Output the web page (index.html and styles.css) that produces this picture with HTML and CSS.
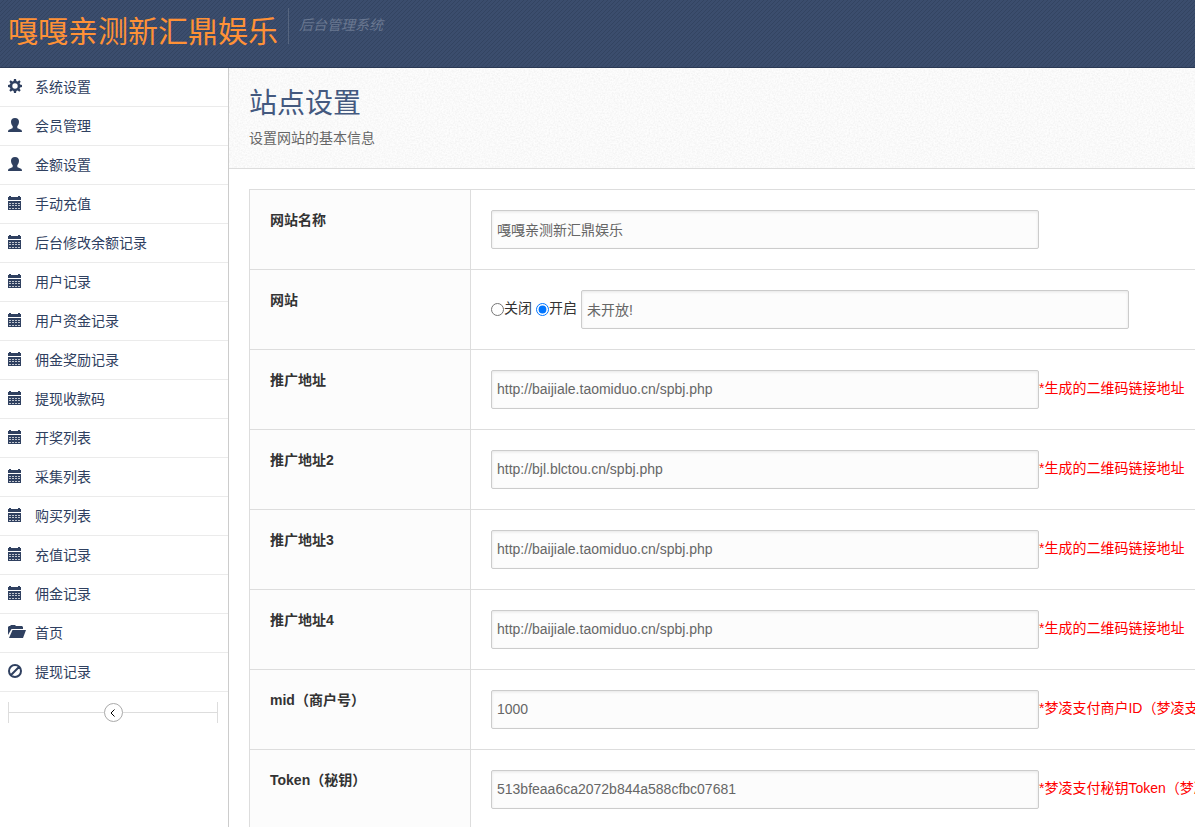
FILE: index.html
```
<!DOCTYPE html>
<html lang="zh-CN">
<head>
  <meta charset="UTF-8">
  <meta name="viewport" content="width=device-width, initial-scale=1">
  <title>站点设置</title>
  <link rel="stylesheet" href="styles.css">
</head>
<body>
  <!-- icon set -->
  <svg class="icon-defs" aria-hidden="true">
    <symbol id="i-cog" viewBox="0 0 14 14" preserveAspectRatio="xMinYMid">
      <path fill-rule="evenodd" d="M6 0h2l.4 1.900 1.300.5 1.600-1.100 1.400 1.400-1.100 1.600.5 1.300L14 6v2l-1.900.4-.5 1.300 1.100 1.600-1.400 1.400-1.600-1.100-1.300.5L8 14H6l-.4-1.900-1.300-.5-1.600 1.100-1.400-1.400 1.100-1.600-.5-1.300L0 8V6l1.900-.4.5-1.300-1.100-1.600 1.400-1.400 1.600 1.100 1.300-.5zM7 4.300a2.700 2.700 0 1 0 0 5.400a2.700 2.700 0 1 0 0-5.400z"/>
    </symbol>
    <symbol id="i-user" viewBox="0 0 14 14" preserveAspectRatio="xMinYMid">
      <path d="M7 0c2.600 0 4 1.400 4 3.800 0 1.900-.7 3.500-1.700 4.400v1.200c0 .6.300.9.900 1.200l2.200.9c1.100.4 1.600 1.100 1.600 2.500H0c0-1.400.5-2.100 1.600-2.500l2.200-.9c.6-.3.9-.6.9-1.200V8.200C3.700 7.300 3 5.700 3 3.800 3 1.400 4.400 0 7 0z"/>
    </symbol>
    <symbol id="i-cal" viewBox="0 0 14 14" preserveAspectRatio="xMinYMid">
      <path d="M0 1h1V0h2v1h7V0h2v1h1v3H0zM0 5h13v9H0z"/>
      <path fill="#fff" fill-opacity=".7" d="M1 7h2v1H1zM4 7h2v1H4zM7 7h2v1H7zM10 7h2v1h-2zM1 9h2v1H1zM4 9h2v1H4zM7 9h2v1H7zM10 9h2v1h-2zM1 12h2v1H1zM4 12h2v1H4zM7 12h2v1H7zM10 12h2v1h-2z"/>
    </symbol>
    <symbol id="i-folder" viewBox="0 0 18 14" preserveAspectRatio="xMinYMid">
      <path d="M0 10V2l1-1h1l1-1h4l1 1h6l1 1v2H3.500z"/>
      <path d="M4.500 5H18l-3 8H1z"/>
    </symbol>
    <symbol id="i-ban" viewBox="0 0 14 14" preserveAspectRatio="xMinYMid">
      <path fill="none" stroke="currentColor" stroke-width="2" d="M7 1a6 6 0 1 0 0 12a6 6 0 1 0 0-12zM2.800 11.200l8.400-8.400"/>
    </symbol>
  </svg>

  <header class="topbar">
    <h1 class="brand">嘎嘎亲测新汇鼎娱乐</h1>
    <em class="tagline">后台管理系统</em>
  </header>

  <div class="layout">
    <aside class="sidebar">
      <nav>
        <ul class="menu">
          <li><a href="#"><svg class="icon"><use href="#i-cog"/></svg>系统设置</a></li>
          <li><a href="#"><svg class="icon"><use href="#i-user"/></svg>会员管理</a></li>
          <li><a href="#"><svg class="icon"><use href="#i-user"/></svg>金额设置</a></li>
          <li><a href="#"><svg class="icon"><use href="#i-cal"/></svg>手动充值</a></li>
          <li><a href="#"><svg class="icon"><use href="#i-cal"/></svg>后台修改余额记录</a></li>
          <li><a href="#"><svg class="icon"><use href="#i-cal"/></svg>用户记录</a></li>
          <li><a href="#"><svg class="icon"><use href="#i-cal"/></svg>用户资金记录</a></li>
          <li><a href="#"><svg class="icon"><use href="#i-cal"/></svg>佣金奖励记录</a></li>
          <li><a href="#"><svg class="icon"><use href="#i-cal"/></svg>提现收款码</a></li>
          <li><a href="#"><svg class="icon"><use href="#i-cal"/></svg>开奖列表</a></li>
          <li><a href="#"><svg class="icon"><use href="#i-cal"/></svg>采集列表</a></li>
          <li><a href="#"><svg class="icon"><use href="#i-cal"/></svg>购买列表</a></li>
          <li><a href="#"><svg class="icon"><use href="#i-cal"/></svg>充值记录</a></li>
          <li><a href="#"><svg class="icon"><use href="#i-cal"/></svg>佣金记录</a></li>
          <li><a href="#"><svg class="icon"><use href="#i-folder"/></svg>首页</a></li>
          <li><a href="#"><svg class="icon"><use href="#i-ban"/></svg>提现记录</a></li>
        </ul>
      </nav>
      <div class="collapse">
        <button type="button" class="collapse-btn" aria-label="收起菜单">
          <svg viewBox="0 0 8 8" width="8" height="8"><path d="M5.500 0.500L2 4l3.500 3.500" fill="none" stroke="#000"/></svg>
        </button>
      </div>
    </aside>

    <main class="main">
      <div class="page-head">
        <h2>站点设置</h2>
        <p>设置网站的基本信息</p>
      </div>
      <form class="content">
        <table class="settings">
          <tbody>
            <tr>
              <th scope="row"><label for="sitename">网站名称</label></th>
              <td><div class="field"><input type="text" id="sitename" value="嘎嘎亲测新汇鼎娱乐"></div></td>
            </tr>
            <tr>
              <th scope="row"><label for="closemsg">网站</label></th>
              <td>
                <div class="field">
                  <label class="choice"><input type="radio" name="open" value="0"><span>关闭</span></label>
                  <label class="choice"><input type="radio" name="open" value="1" checked><span>开启</span></label>
                  <input type="text" id="closemsg" value="未开放!">
                </div>
              </td>
            </tr>
            <tr>
              <th scope="row"><label for="url1">推广地址</label></th>
              <td><div class="field"><input type="text" id="url1" value="http://baijiale.taomiduo.cn/spbj.php"><span class="hint">*生成的二维码链接地址</span></div></td>
            </tr>
            <tr>
              <th scope="row"><label for="url2">推广地址2</label></th>
              <td><div class="field"><input type="text" id="url2" value="http://bjl.blctou.cn/spbj.php"><span class="hint">*生成的二维码链接地址</span></div></td>
            </tr>
            <tr>
              <th scope="row"><label for="url3">推广地址3</label></th>
              <td><div class="field"><input type="text" id="url3" value="http://baijiale.taomiduo.cn/spbj.php"><span class="hint">*生成的二维码链接地址</span></div></td>
            </tr>
            <tr>
              <th scope="row"><label for="url4">推广地址4</label></th>
              <td><div class="field"><input type="text" id="url4" value="http://baijiale.taomiduo.cn/spbj.php"><span class="hint">*生成的二维码链接地址</span></div></td>
            </tr>
            <tr>
              <th scope="row"><label for="mid">mid（商户号）</label></th>
              <td><div class="field"><input type="text" id="mid" value="1000"><span class="hint">*梦凌支付商户ID（梦凌支付）</span></div></td>
            </tr>
            <tr>
              <th scope="row"><label for="token">Token（秘钥）</label></th>
              <td><div class="field"><input type="text" id="token" value="513bfeaa6ca2072b844a588cfbc07681"><span class="hint">*梦凌支付秘钥Token（梦凌支付）</span></div></td>
            </tr>
          </tbody>
        </table>
      </form>
    </main>
  </div>
</body>
</html>
```
FILE: styles.css
```
* {
  box-sizing: border-box;
}
body {
  margin: 0;
  height: 100vh;
  display: flex;
  flex-direction: column;
  font-family: "Liberation Sans", "Noto Sans CJK SC", sans-serif;
  font-size: 14px;
  line-height: 20px;
  color: #333;
  background: #fff;
}
.icon-defs {
  position: absolute;
  width: 0;
  height: 0;
}

/* top bar */
.topbar {
  flex: none;
  display: flex;
  align-items: flex-start;
  height: 68px;
  padding: 8px;
  background: #3b4d6d url("data:image/svg+xml,%3Csvg xmlns='http://www.w3.org/2000/svg' width='4' height='4' shape-rendering='crispEdges'%3E%3Cpath fill='%23334461' d='M3 0h1v1H3zM2 1h1v1H2zM1 2h1v1H1zM0 3h1v1H0z'/%3E%3C/svg%3E");
  border-bottom: 1px solid #2b3a56;
}
.brand {
  margin: 0;
  padding-right: 10px;
  font-size: 30px;
  font-weight: normal;
  line-height: 48px;
  color: #ff9136;
}
.tagline {
  height: 36px;
  padding-left: 10px;
  border-left: 1px solid #56657f;
  line-height: 34px;
  color: #697790;
}

.layout {
  flex: 1;
  display: flex;
  min-height: 0;
}

/* sidebar */
.sidebar {
  flex: none;
  width: 229px;
  border-right: 1px solid #ccc;
  overflow: hidden;
}
.menu {
  margin: 0;
  padding: 0;
  list-style: none;
}
.menu a {
  display: flex;
  align-items: center;
  height: 39px;
  padding-left: 8px;
  border-bottom: 1px solid #ebebeb;
  color: #2f4060;
  text-decoration: none;
}
.menu a:hover {
  background: #f7f7f7;
}
.icon {
  width: 18px;
  height: 14px;
  margin: 0 9px 2px 0;
  fill: currentColor;
}
.collapse {
  display: flex;
  align-items: center;
  justify-content: center;
  height: 21px;
  margin: 10px 10px 0 8px;
  border: solid #ddd;
  border-width: 0 1px;
  background: linear-gradient(#ddd, #ddd) center / 100% 1px no-repeat;
}
.collapse-btn {
  display: flex;
  align-items: center;
  justify-content: center;
  width: 19px;
  height: 19px;
  padding: 0;
  border: 1px solid #aaa;
  border-radius: 50%;
  background: #fff;
  cursor: pointer;
}

/* main area */
.main {
  flex: 1;
  min-width: 0;
  overflow: auto;
  scrollbar-width: none;
}
.page-head {
  position: sticky;
  left: 0;
  height: 101px;
  padding: 15px 20px;
  border-bottom: 1px solid #ddd;
  background: #fdfdfd url("data:image/svg+xml,%3Csvg xmlns='http://www.w3.org/2000/svg' width='100' height='100'%3E%3Cfilter id='n' x='0' y='0' width='1' height='1'%3E%3CfeTurbulence type='fractalNoise' baseFrequency='.6' numOctaves='3' stitchTiles='stitch'/%3E%3CfeColorMatrix values='0 0 0 0 0 0 0 0 0 0 0 0 0 0 0 .08 0 0 0 -.026'/%3E%3C/filter%3E%3Crect width='100' height='100' filter='url(%23n)'/%3E%3C/svg%3E");
}
.page-head h2 {
  margin: 0;
  font-size: 28px;
  font-weight: normal;
  line-height: 42px;
  color: #44597f;
}
.page-head p {
  margin: 3px 0 0;
  color: #666;
}
.content {
  padding: 20px;
}
.settings {
  border-collapse: collapse;
  white-space: nowrap;
  min-width: 100%;
}
.settings th,
.settings td {
  height: 80px;
  padding: 20px;
  border: 1px solid #ddd;
  text-align: left;
  vertical-align: top;
}
.settings th {
  width: 221px;
  min-width: 221px;
  background: #fcfcfc;
}
.field {
  display: flex;
  align-items: center;
}
.field input[type="text"] {
  flex: none;
  width: 548px;
  height: 39px;
  padding: 0 5px 2px;
  border: 1px solid #ccc;
  border-radius: 2px;
  background: #fcfcfc;
  box-shadow: inset 0 1px 3px rgba(0,0,0,0.09);
  font: inherit;
  color: #666;
}
.choice {
  display: flex;
  align-items: center;
  margin-right: 4px;
}
.choice input {
  width: 13px;
  height: 13px;
  margin: 0;
}
.choice span,
.hint {
  padding-bottom: 4px;
}
.hint {
  color: #f00;
}
```
